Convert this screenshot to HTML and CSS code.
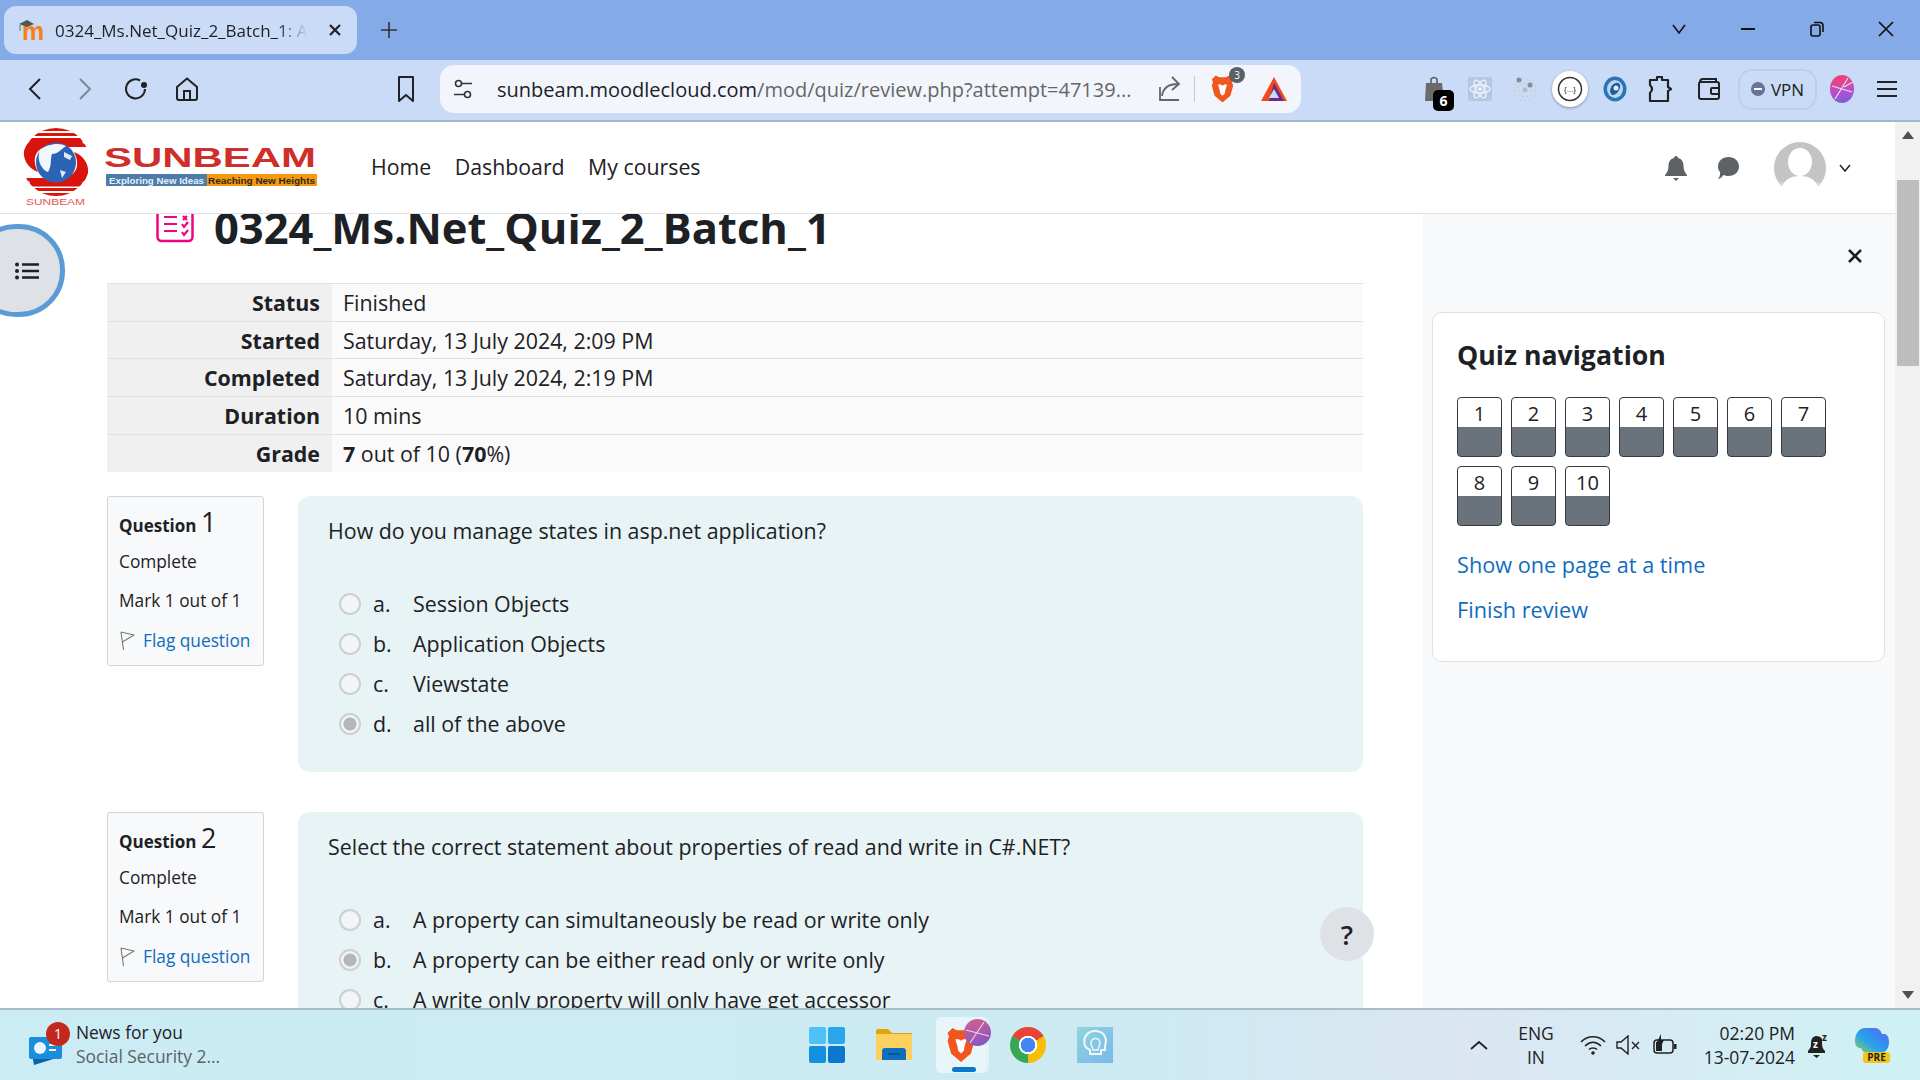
FILE: index.html
```html
<!DOCTYPE html>
<html lang="en">
  <head>
    <meta charset="UTF-8" />
    <title>0324_Ms.Net_Quiz_2_Batch_1: Attempt review</title>
    <link rel="stylesheet" href="styles.css">
  </head>
  <body>
    <div class="screen">
      <!-- Browser tab strip -->
      <div class="tabstrip">
        <div class="tab">
          <svg class="favicon" width="26" height="26" viewBox="0 0 26 26">
            <text x="3" y="23" class="favicon-m">m</text>
            <path d="M0 7 L8 3 L15 7 L8 10 Z" fill="#555" />
            <path d="M1 8 V14" stroke="#777" fill="none" />
          </svg>
          <span class="tab-title">0324_Ms.Net_Quiz_2_Batch_1: Attempt review</span>
          <svg class="tab-close" width="14" height="14" viewBox="0 0 14 14"><path d="M2 2 L12 12 M12 2 L2 12" stroke="#222" stroke-width="2.2" fill="none" /></svg>
        </div>
        <svg class="new-tab" width="18" height="18" viewBox="0 0 18 18"><path d="M9 1 V17 M1 9 H17" stroke="#333" stroke-width="1.6" fill="none" /></svg>
        <div class="win-controls">
          <span class="win-btn"><svg width="16" height="12" viewBox="0 0 16 12"><path d="M2 2 L8 10 L14 2" stroke="#111" stroke-width="1.6" fill="none" /></svg></span>
          <span class="win-btn"><svg width="16" height="4" viewBox="0 0 16 4"><path d="M1 2 H15" stroke="#111" stroke-width="2" /></svg></span>
          <span class="win-btn"><svg width="16" height="16" viewBox="0 0 16 16"><rect x="2" y="4" width="9" height="11" rx="2" stroke="#111" stroke-width="1.6" fill="none" /><path d="M5 1.5 H11 Q14 1.5 14 4.5 V11" stroke="#111" stroke-width="1.6" fill="none" /></svg></span>
          <span class="win-btn"><svg width="16" height="16" viewBox="0 0 16 16"><path d="M1 1 L15 15 M15 1 L1 15" stroke="#111" stroke-width="1.7" fill="none" /></svg></span>
        </div>
      </div>

      <!-- Browser toolbar -->
      <div class="toolbar">
        <span class="nav-btn"><svg width="16" height="24" viewBox="0 0 16 24"><path d="M13 2 L3 12 L13 22" stroke="#222" stroke-width="2" fill="none" /></svg></span>
        <span class="nav-btn"><svg width="16" height="24" viewBox="0 0 16 24"><path d="M3 2 L13 12 L3 22" stroke="#7b8794" stroke-width="2" fill="none" /></svg></span>
        <span class="nav-btn nav-reload"><svg width="26" height="26" viewBox="0 0 26 26"><path d="M22 13 A9.5 9.5 0 1 1 17 4.5" stroke="#222" stroke-width="2" fill="none" /><circle cx="21" cy="9" r="3" fill="#222" /></svg></span>
        <span class="nav-btn"><svg width="26" height="26" viewBox="0 0 26 26"><path d="M3 11 L13 2.5 L23 11 V22 Q23 24 21 24 H5 Q3 24 3 22 Z M10 24 V15 H16 V24" stroke="#222" stroke-width="2" fill="none" /></svg></span>
        <span class="nav-btn bookmark"><svg width="20" height="28" viewBox="0 0 20 28"><path d="M3 2 H17 V26 L10 20 L3 26 Z" stroke="#222" stroke-width="2" stroke-linejoin="round" fill="none" /></svg></span>
        <div class="addressbar">
          <svg width="20" height="20" viewBox="0 0 20 20"><circle cx="5.5" cy="4.5" r="3" stroke="#333" stroke-width="1.6" fill="none" /><circle cx="14.5" cy="15.5" r="3" stroke="#333" stroke-width="1.6" fill="none" /><path d="M9 4.5 H19 M1 15.5 H11" stroke="#333" stroke-width="1.6" /></svg>
          <span class="url"><span class="url-host">sunbeam.moodlecloud.com</span>/mod/quiz/review.php?attempt=47139...</span>
          <svg class="share" width="26" height="28" viewBox="0 0 26 28"><path d="M3 12 V25 H22 M5 21 C6 13 11 9 21 9 M15 2 L22 9 L15 15" stroke="#666" stroke-width="1.8" fill="none" /></svg>
          <span class="addr-sep"></span>
          <span class="brave-slot">
            <svg width="27" height="32" viewBox="0 0 24 28"><path d="M6 2 L9 3.5 H15 L18 2 L21.5 5.5 L20.5 8 L21.5 11 L19 20 L12 26 L5 20 L2.5 11 L3.5 8 L2.5 5.5 Z" fill="#f1561f" /><path d="M8 10 L10.5 10 L12 11 L13.5 10 L16 10 L14.5 15 L14 18 L12 20 L10 18 L9.5 15 Z" fill="#fff" /></svg>
            <span class="brave-badge">3</span>
          </span>
          <svg width="28" height="26" viewBox="0 0 28 26"><path d="M14 1 L27 25 H1 Z" fill="#f0481f" /><path d="M14 7 L24 25 H9 Z" fill="#6b2a86" /><path d="M14 13 L19 22 H9 Z" fill="#c9dbf6" /></svg>
        </div>
        <div class="extensions">
          <span class="ext">
            <svg width="24" height="28" viewBox="0 0 24 28"><path d="M3 8 H19 L21 26 H2 Z" fill="#6b6b6b" /><path d="M8 8 V4 Q11 1 14 4 V8" stroke="#555" stroke-width="1.5" fill="none" /></svg>
            <span class="ext-count">6</span>
          </span>
          <span class="ext"><svg width="24" height="24" viewBox="0 0 24 24"><rect width="24" height="24" rx="2" fill="#b4c8e4" /><g stroke="#eef3fb" stroke-width="1.3" fill="none"><ellipse cx="12" cy="12" rx="10" ry="4" /><ellipse cx="12" cy="12" rx="10" ry="4" transform="rotate(60 12 12)" /><ellipse cx="12" cy="12" rx="10" ry="4" transform="rotate(120 12 12)" /></g><circle cx="12" cy="12" r="2" fill="#eef3fb" /></svg></span>
          <span class="ext"><svg width="26" height="26" viewBox="0 0 26 26"><circle cx="13" cy="14" r="11" stroke="#c6c9ca" stroke-dasharray="2 2" fill="none" /><circle cx="13" cy="14" r="7" stroke="#c6c9ca" stroke-dasharray="2 2" fill="none" /><circle cx="7" cy="4" r="2.5" fill="#8a8a8a" /><circle cx="18" cy="9" r="2.5" fill="#8a8a8a" /><circle cx="13" cy="14" r="2.5" fill="#bbb" /></svg></span>
          <span class="ext ext-round"><svg width="26" height="26" viewBox="0 0 26 26"><circle cx="13" cy="13" r="11.5" stroke="#333" stroke-width="1.5" fill="#fff" /><text x="13" y="16" class="ext-braces">{...}</text></svg></span>
          <span class="ext"><svg width="24" height="26" viewBox="0 0 24 26"><ellipse cx="12" cy="13" rx="11.5" ry="12.5" fill="#2c74b8" /><ellipse cx="12" cy="13" rx="8" ry="9" fill="#bcd6ee" /><path d="M7 16 C7 8 15 4 17 9 C18 13 13 20 9 19 Z" fill="#1c5c9e" /><circle cx="13" cy="12" r="2.5" fill="#e6f0fa" /></svg></span>
          <span class="ext"><svg width="26" height="30" viewBox="0 0 26 30"><path d="M3 6 H10 V3 H15 V6 H21 V13 L24 15 L21 17 V27 H3 V19 Q7 15 3 11 Z" stroke="#222" stroke-width="2.2" stroke-linejoin="round" fill="none" /></svg></span>
          <span class="ext ext-wallet"><svg width="24" height="24" viewBox="0 0 24 24"><rect x="2" y="5" width="20" height="17" rx="2" stroke="#222" stroke-width="2" fill="none" /><path d="M3 5 Q3 2 6 2 H19 V5" stroke="#222" stroke-width="2" fill="none" /><rect x="14" y="11" width="8" height="6" rx="1" stroke="#222" stroke-width="2" fill="none" /></svg></span>
        </div>
        <span class="vpn"><span class="vpn-dot"></span>VPN</span>
        <span class="ball"><svg width="24" height="28" viewBox="0 0 24 28"><path d="M2 11 L22 17 M5 24 L18 3 M14 12 L23 7" stroke="#f4d9ea" stroke-width="1.2" fill="none" /></svg></span>
        <span class="menu-btn"><svg width="20" height="18" viewBox="0 0 20 18"><path d="M0 2 H20 M0 9 H20 M0 16 H20" stroke="#222" stroke-width="2" /></svg></span>
      </div>

      <!-- Page viewport -->
      <div class="viewport">
        <div class="page">
          <header class="site-header">
            <svg class="logo" width="340" height="91" viewBox="0 122 340 91">
              <defs>
                <clipPath id="disc"><circle cx="56" cy="162" r="34" /></clipPath>
              </defs>
              <g clip-path="url(#disc)" fill="#d9140c">
                <rect x="20" y="128" width="72" height="3" />
                <rect x="20" y="133" width="72" height="3" />
                <rect x="20" y="138" width="72" height="3.5" />
                <rect x="20" y="143.5" width="72" height="3.5" />
                <rect x="20" y="178" width="72" height="3.5" />
                <rect x="20" y="183" width="72" height="3.5" />
                <rect x="20" y="188" width="72" height="3" />
                <rect x="20" y="193" width="72" height="3" />
              </g>
              <path d="M84 146 H52 C38 146 30 156 38 172 C27 168 23 158 24 151 C25 147 27 144 30 141 H82 Z" fill="#d9140c" />
              <path d="M28 178 H60 C74 178 82 168 74 152 C85 156 89 166 88 173 C87 177 85 180 82 183 H30 Z" fill="#d9140c" />
              <circle cx="56" cy="162.5" r="20" fill="#2b63b5" />
              <path d="M40 150 C46 144 60 142 66 146 C60 150 58 154 52 154 C50 160 52 166 48 172 C42 170 36 160 40 150 Z" fill="#f3f6fb" />
              <path d="M64 152 L72 156 L70 160 L64 157 Z M60 170 L66 172 L62 178 Z" fill="#dfe9f6" />
              <text x="26" y="205" class="logo-mini" textLength="59" lengthAdjust="spacingAndGlyphs">SUNBEAM</text>
              <text x="104" y="167" class="logo-name" textLength="212" lengthAdjust="spacingAndGlyphs">SUNBEAM</text>
              <rect x="106" y="174" width="101" height="12" fill="#4a7ba9" />
              <rect x="207" y="174" width="110" height="12" fill="#f7980f" />
              <text x="109" y="184" class="logo-tag logo-tag-light" textLength="95" lengthAdjust="spacingAndGlyphs">Exploring New Ideas</text>
              <text x="208" y="184" class="logo-tag" textLength="107" lengthAdjust="spacingAndGlyphs">Reaching New Heights</text>
            </svg>
            <nav class="site-nav">
              <a>Home</a>
              <a>Dashboard</a>
              <a>My courses</a>
            </nav>
            <div class="user-area">
              <svg class="user-bell" width="24" height="26" viewBox="0 0 24 26"><path d="M12 1 C13.5 1 14 2 14 3 C18 4 19.5 7 19.5 11 C19.5 15 21 18 23 20 V21 H1 V20 C3 18 4.5 15 4.5 11 C4.5 7 6 4 10 3 C10 2 10.5 1 12 1 Z M9 23 H15 L12 26 Z" fill="#5f6265" /></svg>
              <svg class="user-chat" width="24" height="24" viewBox="0 0 24 24"><path d="M12.5 1 C18.5 1 23 5 23 10.5 C23 16 18.5 20 12.5 20 C10.5 20 9 19.5 7.5 19 C6 21 4 23 2 23 C3.5 21 4.5 18.5 4 16 C2.5 14.5 2 12.5 2 10.5 C2 5 6.5 1 12.5 1 Z" fill="#5f6265" /></svg>
              <svg class="user-avatar" width="54" height="52" viewBox="0 0 54 52">
                <defs>
                  <linearGradient id="fade" x1="0" y1="0" x2="0" y2="1">
                    <stop offset="0.75" stop-color="#c4c4c4" />
                    <stop offset="0.92" stop-color="#fff" />
                  </linearGradient>
                </defs>
                <circle cx="27" cy="26" r="26" fill="url(#fade)" />
                <ellipse cx="27" cy="20" rx="12" ry="14" fill="#fff" />
                <path d="M8 52 C8 38 18 34 27 34 C36 34 46 38 46 52 Z" fill="#fff" />
              </svg>
              <svg class="user-caret" width="12" height="8" viewBox="0 0 12 8"><path d="M1 1 L6 7 L11 1" stroke="#222" stroke-width="1.5" fill="none" /></svg>
            </div>
          </header>

          <div class="page-body">
            <main class="content">
              <div class="title-row">
                <svg class="title-icon" width="38" height="50" viewBox="0 0 38 50">
                  <rect x="1.5" y="2" width="35" height="36" rx="4" stroke="#f0047f" stroke-width="2.5" fill="none" />
                  <path d="M8 14 H21 M8 21 H21 M8 28 H21 M27 13 L31 17 M31 13 L27 17 M26 21 L28 24 L32 19 M26 29 L28 32 L32 27" stroke="#f0047f" stroke-width="2.2" fill="none" />
                </svg>
                <h1 class="title">0324_Ms.Net_Quiz_2_Batch_1</h1>
              </div>

              <table class="summary">
                <tr><th>Status</th><td>Finished</td></tr>
                <tr><th>Started</th><td>Saturday, 13 July 2024, 2:09 PM</td></tr>
                <tr><th>Completed</th><td>Saturday, 13 July 2024, 2:19 PM</td></tr>
                <tr><th>Duration</th><td>10 mins</td></tr>
                <tr><th>Grade</th><td><b>7</b> out of 10 (<b>70</b>%)</td></tr>
              </table>

              <!-- Question 1 -->
              <section class="question">
                <div class="q-info">
                  <h3 class="q-no">Question <span class="q-num">1</span></h3>
                  <div class="q-state">Complete</div>
                  <div class="q-mark">Mark 1 out of 1</div>
                  <a class="q-flag"><svg width="16" height="20" viewBox="0 0 16 20"><path d="M2 1 L4.5 19 M2 1 L15 4 L3.5 11" stroke="#777" stroke-width="1.1" fill="none" /></svg>Flag question</a>
                </div>
                <div class="q-content">
                  <p class="q-text">How do you manage states in asp.net application?</p>
                  <label class="option"><input type="radio" disabled /><span class="opt-letter">a.</span>Session Objects</label>
                  <label class="option"><input type="radio" disabled /><span class="opt-letter">b.</span>Application Objects</label>
                  <label class="option"><input type="radio" disabled /><span class="opt-letter">c.</span>Viewstate</label>
                  <label class="option"><input type="radio" disabled checked /><span class="opt-letter">d.</span>all of the above</label>
                </div>
              </section>

              <!-- Question 2 -->
              <section class="question">
                <div class="q-info">
                  <h3 class="q-no">Question <span class="q-num">2</span></h3>
                  <div class="q-state">Complete</div>
                  <div class="q-mark">Mark 1 out of 1</div>
                  <a class="q-flag"><svg width="16" height="20" viewBox="0 0 16 20"><path d="M2 1 L4.5 19 M2 1 L15 4 L3.5 11" stroke="#777" stroke-width="1.1" fill="none" /></svg>Flag question</a>
                </div>
                <div class="q-content">
                  <p class="q-text">Select the correct statement about properties of read and write in C#.NET?</p>
                  <label class="option"><input type="radio" disabled /><span class="opt-letter">a.</span>A property can simultaneously be read or write only</label>
                  <label class="option"><input type="radio" disabled checked /><span class="opt-letter">b.</span>A property can be either read only or write only</label>
                  <label class="option"><input type="radio" disabled /><span class="opt-letter">c.</span>A write only property will only have get accessor</label>
                </div>
              </section>
            </main>

            <aside class="drawer">
              <svg class="drawer-close" width="16" height="16" viewBox="0 0 16 16"><path d="M2 2 L14 14 M14 2 L2 14" stroke="#1d2125" stroke-width="2.6" fill="none" /></svg>
              <div class="quiz-nav">
                <h4 class="quiz-nav-title">Quiz navigation</h4>
                <div class="quiz-nav-grid">
                  <span class="qn-btn">1</span>
                  <span class="qn-btn">2</span>
                  <span class="qn-btn">3</span>
                  <span class="qn-btn">4</span>
                  <span class="qn-btn">5</span>
                  <span class="qn-btn">6</span>
                  <span class="qn-btn">7</span>
                  <span class="qn-btn">8</span>
                  <span class="qn-btn">9</span>
                  <span class="qn-btn">10</span>
                </div>
                <a class="qn-link qn-link-first">Show one page at a time</a>
                <a class="qn-link">Finish review</a>
              </div>
            </aside>
          </div>

          <button class="index-toggle"><svg width="24" height="18" viewBox="0 0 24 18"><path d="M7 2.5 H24 M7 9 H24 M7 15.5 H24" stroke="#1d2125" stroke-width="2.4" /><circle cx="2" cy="2.5" r="2" fill="#1d2125" /><circle cx="2" cy="9" r="2" fill="#1d2125" /><circle cx="2" cy="15.5" r="2" fill="#1d2125" /></svg></button>
          <button class="help-btn">?</button>
        </div>

        <div class="scrollbar">
          <svg class="sb-arrow" width="12" height="8" viewBox="0 0 12 8"><path d="M6 0 L12 8 H0 Z" fill="#505050" /></svg>
          <div class="sb-track"><div class="sb-thumb"></div></div>
          <svg class="sb-arrow" width="12" height="8" viewBox="0 0 12 8"><path d="M0 0 H12 L6 8 Z" fill="#505050" /></svg>
        </div>
      </div>

      <!-- Windows taskbar -->
      <div class="taskbar">
        <div class="news">
          <span class="news-icon">
            <svg width="40" height="44" viewBox="0 0 40 44">
              <path d="M30 4 H36 V20 H30 Z" fill="#4caf7a" />
              <path d="M2 22 L30 18 L32 34 L6 42 Z" fill="#0b63a8" />
              <rect x="1" y="14" width="33" height="22" rx="2" fill="#1c8ddd" />
              <circle cx="12" cy="25" r="6" fill="#eaf6fd" />
              <path d="M21 22 H30 M21 27 H28" stroke="#eaf6fd" stroke-width="2" />
            </svg>
            <span class="news-badge">1</span>
          </span>
          <span class="news-text">
            <span class="news-title">News for you</span>
            <span class="news-sub">Social Security 2...</span>
          </span>
        </div>
        <div class="tb-apps">
          <span class="tb-app">
            <svg width="36" height="36" viewBox="0 0 36 36"><rect width="17" height="17" rx="2" fill="#4cc2f6" /><rect x="19" width="17" height="17" rx="2" fill="#2aa6ea" /><rect y="19" width="17" height="17" rx="2" fill="#1590de" /><rect x="19" y="19" width="17" height="17" rx="2" fill="#0a78cf" /></svg>
          </span>
          <span class="tb-app">
            <svg width="36" height="32" viewBox="0 0 36 32"><path d="M0 2 Q0 0 2 0 H12 L16 4 H36 V31 H0 Z" fill="#dfa30b" /><rect y="5" width="36" height="26" fill="#fdd160" /><path d="M6 31 V22 Q6 19 9 19 H27 Q30 19 30 22 V31 Z" fill="#0f6fbe" /><path d="M12 25 H24" stroke="#084e8a" stroke-width="1.5" /></svg>
          </span>
          <span class="tb-app tb-app-active">
            <svg width="34" height="40" viewBox="0 0 24 28"><path d="M6 2 L9 3.5 H15 L18 2 L21.5 5.5 L20.5 8 L21.5 11 L19 20 L12 26 L5 20 L2.5 11 L3.5 8 L2.5 5.5 Z" fill="#f1561f" /><path d="M8 10 L10.5 10 L12 11 L13.5 10 L16 10 L14.5 15 L14 18 L12 20 L10 18 L9.5 15 Z" fill="#fff" /></svg>
            <span class="tb-ball"><svg width="27" height="27" viewBox="0 0 27 27"><path d="M2 11 L25 17 M6 24 L20 3" stroke="#f0cfe2" stroke-width="1.2" fill="none" /></svg></span>
            <span class="tb-indicator"></span>
          </span>
          <span class="tb-app"><span class="chrome-icon"></span></span>
          <span class="tb-app">
            <svg width="36" height="36" viewBox="0 0 36 36">
              <defs>
                <linearGradient id="tile" x1="0" y1="0" x2="1" y2="1">
                  <stop offset="0" stop-color="#8fd6d8" />
                  <stop offset="1" stop-color="#7ab6ef" />
                </linearGradient>
              </defs>
              <rect width="36" height="36" fill="url(#tile)" />
              <path d="M8 19 C5 9 12 4 18 4 C26 4 31 10 28 19 L28 23 H24 V27 H13 V23 C11 22 9 21 8 19 Z" stroke="#eef9fb" stroke-width="2" fill="none" />
              <path d="M14 16 C14 10 23 10 23 16 C23 19 21 20 21 23 H16 C16 20 14 19 14 16 Z" stroke="#eef9fb" stroke-width="1.5" fill="none" />
            </svg>
          </span>
        </div>
        <div class="tray">
          <svg class="tray-caret" width="18" height="10" viewBox="0 0 18 10"><path d="M1 9 L9 2 L17 9" stroke="#222" stroke-width="1.8" fill="none" /></svg>
          <span class="tray-lang">ENG<br />IN</span>
          <svg class="tray-wifi" width="26" height="20" viewBox="0 0 26 20"><path d="M1 7 C8 0 18 0 25 7 M5 11 C10 6 16 6 21 11 M9 14.5 C11 12.5 15 12.5 17 14.5" stroke="#222" stroke-width="1.6" fill="none" /><circle cx="13" cy="18" r="1.8" fill="#222" /></svg>
          <svg class="tray-sound" width="24" height="20" viewBox="0 0 24 20"><path d="M1 7 H5 L12 1 V19 L5 13 H1 Z" stroke="#222" stroke-width="1.4" fill="none" /><path d="M16 7 L23 14 M23 7 L16 14" stroke="#222" stroke-width="1.4" /></svg>
          <svg class="tray-battery" width="24" height="24" viewBox="0 0 24 24"><rect x="1" y="7" width="19" height="13" rx="3" stroke="#222" stroke-width="1.5" fill="none" /><rect x="3" y="9" width="6" height="9" fill="#222" /><rect x="21" y="11" width="2.5" height="5" fill="#222" /><path d="M8 1 L4 9 H8 L7 15 L11 7 H8 Z" fill="#222" /></svg>
          <span class="tray-clock">02:20 PM<br />13-07-2024</span>
          <svg class="tray-bell" width="24" height="26" viewBox="0 0 24 26"><path d="M9 4 C4 5 4 9 4 13 C4 16 2 17 1 19 V21 H18 V19 C16 17 15 15 15 12 V7 C14 5 12 4 9 4 Z M6 23 H13 L9.5 26 Z" fill="#222" /><text x="6" y="16" class="tray-zz">z</text><text x="15" y="9" class="tray-zz tray-zz-dark">z</text></svg>
          <span class="copilot">
            <svg width="34" height="26" viewBox="0 0 34 26">
              <defs>
                <linearGradient id="cop" x1="0" y1="1" x2="1" y2="0">
                  <stop offset="0" stop-color="#9ad04a" />
                  <stop offset="0.4" stop-color="#29a5e8" />
                  <stop offset="0.75" stop-color="#3f7ff0" />
                  <stop offset="1" stop-color="#d25bcf" />
                </linearGradient>
              </defs>
              <path d="M10 1 H20 C24 1 26 4 27 7 H30 C33 8 34 11 34 15 C34 22 30 26 26 26 H14 C9 26 7 24 6 21 H4 C1 20 0 17 0 14 C0 7 4 1 10 1 Z" fill="url(#cop)" />
            </svg>
            <span class="copilot-pre">PRE</span>
          </span>
        </div>
      </div>
    </div>
  </body>
</html>
```

FILE: styles.css
```css
* {
  box-sizing: border-box;
}
html,
body {
  margin: 0;
  height: 100%;
  overflow: hidden;
}
body {
  font-family: "Open Sans", "Noto Sans", sans-serif;
  color: #1d2125;
}
.screen {
  width: 1920px;
  height: 1080px;
  display: flex;
  flex-direction: column;
}

/* tab strip */
.tabstrip {
  height: 60px;
  background: #84aae8;
  display: flex;
  align-items: flex-start;
  flex-shrink: 0;
}
.tab {
  width: 353px;
  height: 48px;
  margin: 6px 0 0 4px;
  padding-left: 15px;
  background: #c9dbf6;
  border-radius: 12px;
  display: flex;
  align-items: center;
}
.favicon {
  flex-shrink: 0;
}
.favicon-m {
  font-family: "Liberation Sans", sans-serif;
  font-weight: bold;
  font-size: 25px;
  fill: #f98012;
}
.tab-title {
  width: 258px;
  margin-left: 10px;
  font-size: 17px;
  white-space: nowrap;
  overflow: hidden;
  -webkit-mask-image: linear-gradient(to right, #000 86%, transparent 98%);
  mask-image: linear-gradient(to right, #000 86%, transparent 98%);
}
.tab-close {
  margin-left: 15px;
}
.new-tab {
  margin: 21px 0 0 23px;
}
.win-controls {
  margin-left: auto;
  display: flex;
  height: 58px;
}
.win-btn {
  width: 69px;
  display: flex;
  align-items: center;
  justify-content: center;
}

/* toolbar */
.toolbar {
  height: 62px;
  padding: 6px 0 8px 10px;
  background: #c9dbf6;
  border-bottom: 2px solid #a6b5cc;
  display: flex;
  align-items: center;
  flex-shrink: 0;
}
.nav-btn {
  width: 50px;
  display: flex;
  justify-content: center;
}
.nav-reload {
  margin-left: 1px;
  margin-right: 1px;
}
.bookmark {
  margin-left: 169px;
}
.addressbar {
  width: 861px;
  height: 48px;
  margin-left: 9px;
  padding-left: 13px;
  background: #f2f6fc;
  border-radius: 14px;
  display: flex;
  align-items: center;
}
.url {
  width: 654px;
  margin-left: 24px;
  font-size: 20px;
  color: #666;
  white-space: nowrap;
  overflow: hidden;
}
.url-host {
  color: #1d2125;
}
.share {
  margin-left: 6px;
}
.addr-sep {
  width: 1px;
  height: 26px;
  margin-left: 11px;
  background: #c4c8cf;
}
.brave-slot {
  position: relative;
  display: flex;
  margin: 0 24px 0 14px;
}
.brave-badge {
  position: absolute;
  top: -6px;
  right: -9px;
  width: 16px;
  height: 16px;
  border-radius: 50%;
  background: #5b5f67;
  color: #fff;
  font-size: 10px;
  line-height: 16px;
  text-align: center;
}
.extensions {
  margin-left: 111px;
  display: flex;
}
.ext {
  position: relative;
  width: 45px;
  height: 44px;
  display: flex;
  align-items: center;
  justify-content: center;
}
.ext-wallet {
  left: 4px;
}
.ext-round::before {
  content: "";
  position: absolute;
  top: 4px;
  left: 5px;
  width: 36px;
  height: 36px;
  border-radius: 50%;
  background: #fff;
  box-shadow: 0 1px 3px rgba(0, 0, 0, 0.35);
}
.ext-round svg {
  position: relative;
}
.ext-braces {
  font-size: 8px;
  font-family: "Liberation Sans", sans-serif;
  text-anchor: middle;
  fill: #222;
}
.ext-count {
  position: absolute;
  right: 3px;
  bottom: 0;
  width: 21px;
  height: 21px;
  border-radius: 5px;
  background: #000;
  color: #fff;
  font-size: 14px;
  font-weight: 700;
  line-height: 21px;
  text-align: center;
}
.vpn {
  width: 79px;
  height: 41px;
  margin-left: 11px;
  border: 2px solid #bcd0ec;
  border-radius: 14px;
  display: flex;
  align-items: center;
  justify-content: center;
  gap: 6px;
  font-size: 17px;
}
.vpn-dot {
  width: 14px;
  height: 14px;
  border-radius: 50%;
  background: linear-gradient(#fff, #fff) center / 8px 2px no-repeat #6a7396;
}
.ball {
  width: 24px;
  height: 28px;
  margin-left: 13px;
  border-radius: 50%;
  overflow: hidden;
  display: flex;
  background: linear-gradient(170deg, #e9437f 20%, #b34fd0 60%, #6c63d8);
}
.menu-btn {
  width: 45px;
  margin-left: 10px;
  display: flex;
  justify-content: center;
}

/* page */
.viewport {
  flex: 1;
  min-height: 0;
  display: flex;
}
.page {
  position: relative;
  width: 1895px;
  display: flex;
  flex-direction: column;
  background: #fff;
  overflow: hidden;
}
.site-header {
  height: 92px;
  border-bottom: 1px solid #dee2e6;
  display: flex;
  align-items: center;
  flex-shrink: 0;
}
.logo {
  flex-shrink: 0;
}
.logo-mini {
  font-family: "Liberation Sans", sans-serif;
  font-size: 9px;
  fill: #e4574f;
}
.logo-name {
  font-family: "Liberation Sans", sans-serif;
  font-weight: bold;
  font-size: 28px;
  fill: #cf2f2a;
}
.logo-tag {
  font-family: "Liberation Sans", sans-serif;
  font-weight: bold;
  font-size: 9.5px;
  fill: #2a2a1a;
}
.logo-tag-light {
  fill: #e8f0f8;
}
.site-nav {
  margin: -2px 0 0 31px;
  display: flex;
  gap: 23.5px;
  font-size: 21.3px;
}
.user-area {
  margin-left: auto;
  padding-right: 44px;
  display: flex;
  align-items: center;
}
.user-chat {
  margin-left: 28px;
}
.user-avatar {
  margin-left: 33px;
}
.user-caret {
  margin-left: 12px;
}

.page-body {
  flex: 1;
  min-height: 0;
  display: flex;
}
.content {
  width: 1423px;
  padding: 0 60px 0 107px;
  overflow: hidden;
  flex-shrink: 0;
}
.title-row {
  height: 28px;
  margin-bottom: 41px;
  padding-left: 49px;
  display: flex;
  align-items: center;
}
.title-icon {
  flex-shrink: 0;
}
.title {
  margin: 0 0 0 20px;
  font-size: 43.5px;
  font-weight: 700;
  line-height: 28px;
  white-space: nowrap;
}
.summary {
  width: 1256px;
  height: 189px;
  margin-bottom: 24px;
  border-collapse: collapse;
  font-size: 21.4px;
}
.summary tr {
  height: 37.7px;
  border-top: 1px solid #dee2e6;
}
.summary th {
  width: 225px;
  padding: 0 12px 0 0;
  background: #f0f0f0;
  text-align: right;
}
.summary td {
  padding: 0 0 0 11px;
  background: #fafafa;
}
.question {
  display: flex;
  gap: 34px;
  margin-bottom: 40px;
  align-items: flex-start;
}
.q-info {
  width: 157px;
  height: 170px;
  padding: 10px 11px 0;
  background: #f8f9fa;
  border: 1px solid #ced4da;
  border-radius: 3px;
  font-size: 17.3px;
  flex-shrink: 0;
}
.q-no {
  height: 34px;
  margin: 0;
  font-size: 17px;
  font-weight: 700;
  line-height: 34px;
  white-space: nowrap;
}
.q-num {
  font-size: 27px;
  font-weight: 500;
  line-height: 30px;
}
.q-state {
  margin-top: 6px;
  line-height: 30px;
}
.q-mark {
  margin-top: 9px;
  line-height: 30px;
}
.q-flag {
  margin-top: 10px;
  line-height: 30px;
  display: flex;
  align-items: center;
  gap: 8px;
  color: #0f6cbf;
  white-space: nowrap;
}
.q-flag svg {
  flex-shrink: 0;
}
.q-content {
  flex: 1;
  height: 276px;
  padding: 20px 30px 0;
  background: #e7f3f5;
  border-radius: 12px;
  font-size: 21.4px;
}
.q-text {
  margin: 0 0 38px;
  line-height: 30px;
}
.option {
  height: 39.9px;
  padding-left: 11px;
  display: flex;
  align-items: center;
}
.option input {
  appearance: none;
  width: 22px;
  height: 22px;
  margin: 0 12px 0 0;
  background: #f2f5f5;
  border: 2px solid #ccd0d2;
  border-radius: 50%;
  flex-shrink: 0;
}
.option input:checked {
  background: radial-gradient(circle, #b4b7b9 0 6px, #f2f5f5 7px);
}
.opt-letter {
  width: 40px;
  flex-shrink: 0;
}

/* right drawer */
.drawer {
  flex: 1;
  padding: 35px 10px 0 9px;
  background: #f8f9fa;
  position: relative;
}
.drawer-close {
  position: absolute;
  top: 34px;
  right: 32px;
}
.quiz-nav {
  margin-top: 63px;
  height: 350px;
  padding: 24px;
  background: #fff;
  border: 1px solid #dee2e6;
  border-radius: 10px;
}
.quiz-nav-title {
  margin: 0 0 24px;
  font-size: 26.7px;
  font-weight: 700;
  line-height: 36px;
}
.quiz-nav-grid {
  width: 380px;
  display: flex;
  flex-wrap: wrap;
  gap: 9px;
}
.qn-btn {
  width: 45px;
  height: 60px;
  padding-top: 2px;
  border: 1px solid #343a40;
  border-radius: 4px;
  background: linear-gradient(#fff 50%, #6a737b 50%);
  font-size: 20px;
  line-height: 28px;
  text-align: center;
}
.qn-link {
  display: block;
  margin-top: 15px;
  font-size: 21.7px;
  line-height: 30px;
  color: #0f6cbf;
}
.qn-link-first {
  margin-top: 24px;
}

/* floating buttons */
.index-toggle {
  position: absolute;
  top: 102px;
  left: -30px;
  width: 95px;
  height: 93px;
  padding: 0 0 0 18px;
  background: #dee2e6;
  border: 5px solid #5b9bd5;
  border-radius: 46px;
  display: flex;
  align-items: center;
  justify-content: center;
}
.help-btn {
  position: absolute;
  left: 1320px;
  top: 785px;
  width: 54px;
  height: 54px;
  border: 0;
  border-radius: 50%;
  background: #dee2e6;
  color: #1d2125;
  font-family: inherit;
  font-size: 27px;
  font-weight: 600;
}

/* page scrollbar */
.scrollbar {
  width: 25px;
  padding: 9px 1px 9px 2px;
  background: #f1f1f1;
  display: flex;
  flex-direction: column;
  align-items: center;
}
.sb-track {
  flex: 1;
  width: 100%;
  padding-top: 41px;
}
.sb-thumb {
  height: 186px;
  background: #bdbdbd;
}

/* taskbar */
.taskbar {
  height: 72px;
  border-top: 2px solid #a8bcc4;
  background: linear-gradient(to right, #cbecf4, #cdeaf2 60%, #dbe6f2 76%, #cff2f4);
  display: grid;
  grid-template-columns: 794px auto 1fr;
  align-items: center;
  flex-shrink: 0;
}
.news {
  padding-left: 28px;
  display: flex;
  align-items: center;
}
.news-icon {
  position: relative;
  width: 40px;
  height: 44px;
  display: block;
}
.news-badge {
  position: absolute;
  top: -1px;
  left: 18px;
  width: 24px;
  height: 24px;
  border-radius: 50%;
  background: #c4271d;
  color: #fff;
  font-size: 14px;
  line-height: 24px;
  text-align: center;
}
.news-text {
  margin: -2px 0 0 8px;
  display: flex;
  flex-direction: column;
  font-size: 17.4px;
  line-height: 24px;
  white-space: nowrap;
}
.news-sub {
  color: #5b6266;
}
.tb-apps {
  display: flex;
  gap: 1px;
}
.tb-app {
  position: relative;
  width: 66px;
  height: 56px;
  display: flex;
  align-items: center;
  justify-content: center;
}
.tb-app-active {
  background: rgba(255, 255, 255, 0.55);
  border-radius: 5px;
  box-shadow: 3px 0 0 rgba(255, 255, 255, 0.4);
  width: 50px;
  margin: 0 8px;
}
.tb-ball {
  position: absolute;
  top: 2px;
  right: -5px;
  width: 27px;
  height: 27px;
  border-radius: 50%;
  overflow: hidden;
  display: flex;
  background: linear-gradient(160deg, #d9608f, #7a55c8);
}
.tb-indicator {
  position: absolute;
  bottom: 1px;
  left: 16px;
  width: 24px;
  height: 5px;
  border-radius: 3px;
  background: #0a78cf;
}
.chrome-icon {
  width: 36px;
  height: 36px;
  border-radius: 50%;
  background:
    radial-gradient(circle, #4285f4 0 7px, #fff 7.5px 9px, transparent 9.5px),
    conic-gradient(from -60deg, #ea4335 0 120deg, #fbbc05 120deg 240deg, #34a853 240deg);
}
.tray {
  display: flex;
  align-items: center;
  justify-content: flex-end;
  padding-right: 30px;
  font-size: 17.5px;
}
.tray-lang {
  width: 60px;
  margin-left: 18px;
  line-height: 24px;
  text-align: center;
}
.tray-wifi {
  margin-left: 14px;
}
.tray-sound {
  margin-left: 10px;
}
.tray-battery {
  margin-left: 13px;
}
.tray-clock {
  width: 118px;
  line-height: 24px;
  text-align: right;
}
.tray-bell {
  margin-left: 12px;
}
.tray-zz {
  font-size: 10px;
  font-weight: 700;
  fill: #fff;
}
.tray-zz-dark {
  fill: #222;
}
.copilot {
  position: relative;
  width: 35px;
  height: 36px;
  margin-left: 24px;
}
.copilot svg {
  display: block;
}
.copilot-pre {
  position: absolute;
  bottom: 0;
  left: 8px;
  width: 27px;
  height: 11px;
  border-radius: 3px;
  background: #f5c518;
  font-size: 10px;
  font-weight: 700;
  line-height: 11px;
  text-align: center;
}
```
